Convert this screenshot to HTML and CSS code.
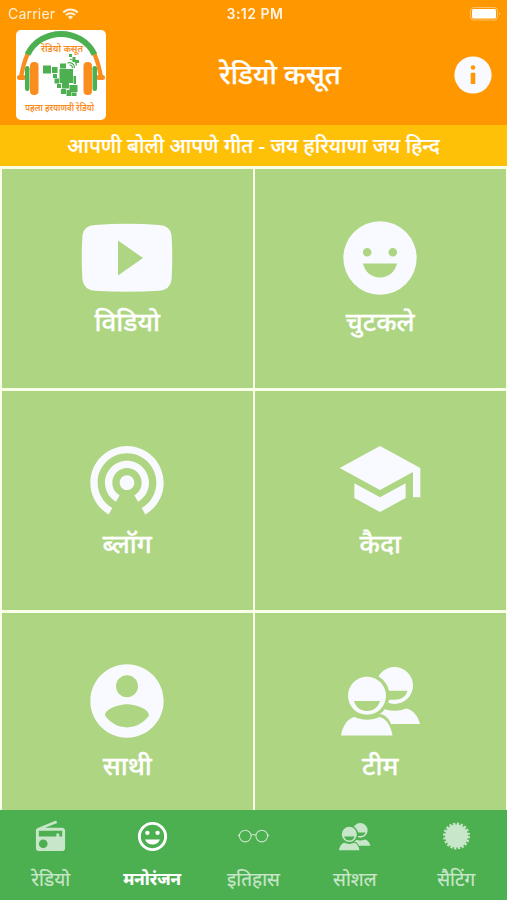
FILE: index.html
```html
<!DOCTYPE html>
<html lang="hi">
<head>
  <meta charset="UTF-8" />
  <meta name="viewport" content="width=device-width, initial-scale=1" />
  <title>रेडियो कसूत</title>
  <link rel="stylesheet" href="styles.css">
</head>
<body>
  <!-- Shared icons -->
  <svg class="sprite" width="0" height="0">
    <defs>
      <mask id="mouth-front" maskUnits="userSpaceOnUse" x="0" y="0" width="88" height="88">
        <rect width="88" height="88" fill="#fff" />
        <path d="M18 44h26c-1.500 6-6.500 10-13 10s-11.500-4-13-10z" fill="#000" />
      </mask>
      <mask id="behind" maskUnits="userSpaceOnUse" x="0" y="0" width="88" height="88">
        <rect width="88" height="88" fill="#fff" />
        <circle cx="31" cy="38.700" r="22.500" fill="#000" />
        <path d="M50 33.700h21.500c-1.500 6-6.500 9-13 9h-8.500z" fill="#000" />
        <path d="M2 81c2-12 8-23 17-24h25c9 1 13 12 15 24z" fill="#000" />
      </mask>
    </defs>
    <symbol id="people" viewBox="0 0 88 88">
      <g mask="url(#behind)">
        <circle cx="58.500" cy="28.500" r="18.500" />
        <path d="M42 50l5 1.500c7 3 16 3 23 0 6 .5 12 7 14 15.500H44z" />
      </g>
      <circle cx="31" cy="38.700" r="19" mask="url(#mouth-front)" />
      <path d="M18.500 60c8 3.500 17 3.500 25 0 6.500 1 11.500 9 13 18.500H5c1.500-9.500 7-17.500 13.500-18.500z" />
    </symbol>
  </svg>

  <div class="app">
    <header class="header">
      <div class="status-bar">
        <div class="carrier">
          <span>Carrier</span>
          <svg class="wifi" viewBox="0 0 18 13">
            <path d="M1.200 4.800a11 11 0 0 1 15.600 0M4 7.700a7 7 0 0 1 10 0" fill="none" stroke="currentColor" stroke-width="2.200" />
            <path d="M9 12.500L6.200 9.700a4 4 0 0 1 5.600 0z" />
          </svg>
        </div>
        <span class="clock">3:12 PM</span>
        <svg class="battery" viewBox="0 0 32 14">
          <rect x=".5" y=".5" width="27" height="12.500" rx="3" fill="none" stroke="#fff" stroke-opacity=".4" />
          <rect x="2" y="2" width="24" height="9.500" rx="1.500" />
          <path d="M29.300 4.700q2 2 0 4z" opacity=".5" />
        </svg>
      </div>

      <div class="title-bar">
        <svg class="logo" viewBox="0 0 90 90">
          <rect width="90" height="90" rx="5" fill="#fff" />
          <g fill="none">
            <path d="M5 47C6.500 38 8.500 31 11.500 24M85 47C83.500 38 81.500 31 78.500 24" stroke="#fb8c1e" stroke-width="4.200" />
            <path d="M11.500 24.500C25-3 65-3 78.500 24.500" stroke="#4caf50" stroke-width="6" />
          </g>
          <g fill="#fb8c1e">
            <rect x="1" y="45" width="9" height="5" rx="2.500" />
            <rect x="80" y="45" width="9" height="5" rx="2.500" />
            <rect x="14" y="32" width="8.500" height="33" rx="4" />
            <rect x="67.500" y="32" width="8.500" height="33" rx="4" />
          </g>
          <g fill="#4caf50">
            <rect x="9" y="36" width="4.500" height="25" rx="2.200" />
            <rect x="76.500" y="36" width="4.500" height="25" rx="2.200" />
            <path d="M27 35.500h8v8h-8zM36 37h5.500v6H36zM37 44h4v4h-4zM43.500 39H57V53H43.500zM44 33.500h6v5h-6zM38.500 48.500h4.500v5h-4.500zM41 54h4v4h-4zM46 53h7v5.500h-7zM53.500 55h8v7h-8zM45 59h5v5h-5zM50.500 60h5v6h-5zM56 62.500h4.500V66H56zM57.500 46H60v8h-2.500zM53 24h3v3h-3zM59 30h4v3h-4zM56.500 27h3v5h-3z" />
          </g>
          <path d="M51.500 33a5 5 0 0 1 7 5M53.500 35a3 3 0 0 1 3 3M54 29.500c4 0 6 2 6.500 6" fill="none" stroke="#4caf50" stroke-width="1.200" />
          <text class="logo-text" x="25" y="22" textLength="42" lengthAdjust="spacingAndGlyphs">रेडियो कसूत</text>
          <text class="logo-text" x="9" y="80.500" textLength="69" lengthAdjust="spacingAndGlyphs">पहला हरयाणवी रेडियो</text>
        </svg>
        <h1>रेडियो कसूत</h1>
        <svg class="info" viewBox="0 0 38 38">
          <circle cx="19" cy="19" r="18.600" fill="#f8faff" />
          <circle cx="19" cy="11.500" r="2.300" fill="#ff9800" />
          <rect x="16.700" y="16.700" width="4.600" height="11.300" rx=".7" fill="#ff9800" />
        </svg>
      </div>
    </header>

    <p class="tagline">आपणी बोली आपणे गीत - जय हरियाणा जय हिन्द</p>

    <main class="grid">
      <div class="tile">
        <svg class="tile-icon" viewBox="0 0 88 88">
          <path fill-rule="evenodd" d="M12 12Q44 9.500 76 12Q87 12.500 88.500 22Q90 45 88.500 67Q87 77 76 77.700Q44 80 12 77.700Q1 77 -.5 67Q-2 45 -.5 22Q1 12.500 12 12zM35 27.500v35l25-17.500z" />
        </svg>
        <span>विडियो</span>
      </div>
      <div class="tile">
        <svg class="tile-icon" viewBox="0 0 88 88">
          <path fill-rule="evenodd" d="M44 8.300a36.700 36.700 0 1 0 0 73.400a36.700 36.700 0 0 0 0-73.400zM31.200 35a4.300 4.300 0 1 1 0 8.600a4.300 4.300 0 0 1 0-8.600zM56.800 35a4.300 4.300 0 1 1 0 8.600a4.300 4.300 0 0 1 0-8.600zM27 50.500h34c-2 8.500-8.500 14-17 14s-15-5.500-17-14z" />
        </svg>
        <span>चुटकले</span>
      </div>
      <div class="tile">
        <svg class="tile-icon" viewBox="0 0 24 24">
          <path d="M12 11c-1.100 0-2 .9-2 2s.9 2 2 2 2-.9 2-2-.9-2-2-2zm6 2c0-3.310-2.690-6-6-6s-6 2.690-6 6c0 2.220 1.210 4.150 3 5.190l1-1.740c-1.190-.7-2-1.970-2-3.450 0-2.210 1.790-4 4-4s4 1.790 4 4c0 1.480-.81 2.750-2 3.450l1 1.740c1.790-1.040 3-2.970 3-5.190zM12 3C6.480 3 2 7.480 2 13c0 3.700 2.010 6.920 4.990 8.650l1-1.730C5.610 18.530 4 15.960 4 13c0-4.420 3.580-8 8-8s8 3.580 8 8c0 2.960-1.610 5.530-4 6.920l1 1.730c2.990-1.730 5-4.950 5-8.650 0-5.520-4.480-10-10-10z" />
        </svg>
        <span>ब्लॉग</span>
      </div>
      <div class="tile">
        <svg class="tile-icon" viewBox="0 0 24 24">
          <path d="M5 13.180v4L12 21l7-3.820v-4L12 17l-7-3.820zM12 3L1 9l11 6 9-4.910V17h2V9L12 3z" />
        </svg>
        <span>कैदा</span>
      </div>
      <div class="tile">
        <svg class="tile-icon" viewBox="0 0 24 24">
          <path d="M12 2C6.480 2 2 6.480 2 12s4.480 10 10 10 10-4.480 10-10S17.520 2 12 2zm0 3c1.660 0 3 1.340 3 3s-1.340 3-3 3-3-1.340-3-3 1.340-3 3-3zm0 14.200c-2.500 0-4.710-1.280-6-3.220.03-1.990 4-3.080 6-3.080 1.990 0 5.970 1.090 6 3.080-1.290 1.940-3.500 3.220-6 3.220z" />
        </svg>
        <span>साथी</span>
      </div>
      <div class="tile">
        <svg class="tile-icon"><use href="#people" /></svg>
        <span>टीम</span>
      </div>
    </main>

    <nav class="tabs">
      <a class="tab">
        <svg viewBox="0 0 24 24">
          <path d="M3.240 6.150C2.510 6.430 2 7.170 2 8v12c0 1.100.89 2 2 2h16c1.110 0 2-.9 2-2V8c0-1.110-.89-2-2-2H8.300l8.260-3.340L15.880 1 3.240 6.150zM7 20c-1.660 0-3-1.340-3-3s1.340-3 3-3 3 1.340 3 3-1.340 3-3 3zm13-8h-2v-2h-2v2H4V8h16v4z" />
        </svg>
        <span>रेडियो</span>
      </a>
      <a class="tab active">
        <svg viewBox="0 0 24 24">
          <circle cx="12" cy="12" r="9" fill="none" stroke="currentColor" stroke-width="2" />
          <circle cx="8.500" cy="9.500" r="1.500" />
          <circle cx="15.500" cy="9.500" r="1.500" />
          <path d="M6.900 14h10.200a5.500 5.500 0 0 1-10.200 0z" />
        </svg>
        <span>मनोरंजन</span>
      </a>
      <a class="tab">
        <svg viewBox="0 0 36 36">
          <g fill="none" stroke="currentColor" stroke-width="1.100">
            <circle cx="9.500" cy="17.500" r="6" />
            <circle cx="26.500" cy="17.500" r="6" />
            <path d="M15.500 17q2.500-2 5 0M2 16.500l1.500 1M34 16.500l-1.500 1" />
          </g>
        </svg>
        <span>इतिहास</span>
      </a>
      <a class="tab">
        <svg><use href="#people" /></svg>
        <span>सोशल</span>
      </a>
      <a class="tab">
        <svg viewBox="0 0 36 36">
          <circle cx="18" cy="17.500" r="11.800" />
          <circle cx="18" cy="17.500" r="12.400" fill="none" stroke="currentColor" stroke-width="2.800" stroke-dasharray="2.300 1.596" />
        </svg>
        <span>सैटिंग</span>
      </a>
    </nav>
  </div>
</body>
</html>
```
FILE: styles.css
```css
:root {
  --orange: #ff9800;
  --amber: #ffc107;
  --tile: #aed581;
  --green: #4caf50;
  --line: #faffea;
  --icon: #f8faff;
}

*, *::before, *::after {
  box-sizing: border-box;
  margin: 0;
  padding: 0;
}

body {
  font-family: "Noto Sans", "Noto Sans Devanagari", sans-serif;
  color: #fff;
  background: var(--line);
}

svg {
  fill: currentColor;
  display: block;
}

.sprite {
  position: absolute;
}

.app {
  display: flex;
  flex-direction: column;
  height: 900px;
  overflow: hidden;
}

.header {
  flex: 0 0 125px;
  background: var(--orange);
}

.status-bar {
  display: grid;
  grid-template-columns: 1fr auto 1fr;
  align-items: center;
  height: 27px;
  padding: 0 5px 0 8px;
  font-family: Inter, sans-serif;
  font-size: 14px;
}

.carrier {
  display: flex;
  align-items: center;
  gap: 7px;
  letter-spacing: 0.2px;
  opacity: 0.85;
}

.wifi {
  width: 17px;
  height: 12px;
}

.clock {
  font-weight: 600;
  letter-spacing: 0.5px;
  opacity: 0.9;
}

.battery {
  width: 32px;
  height: 14px;
  justify-self: end;
}

.title-bar {
  display: flex;
  align-items: center;
  justify-content: space-between;
  height: 96px;
  padding: 0 15px 0 16px;
}

.logo {
  width: 90px;
  height: 90px;
}

.logo-text {
  font-size: 9px;
  font-weight: 600;
  fill: #fb8c1e;
}

h1 {
  font-size: 27.5px;
  font-weight: 500;
  line-height: 40px;
  padding-bottom: 2px;
  -webkit-text-stroke: 0.25px;
}

.info {
  width: 38px;
  height: 38px;
}

.tagline {
  flex: 0 0 41px;
  background: var(--amber);
  font-size: 20.5px;
  font-weight: 500;
  line-height: 41px;
  text-align: center;
  white-space: nowrap;
  -webkit-text-stroke: 0.2px;
}

.grid {
  flex: 0 0 644px;
  display: grid;
  grid-template-columns: 1fr 1fr;
  grid-auto-rows: 219.5px;
  gap: 2.5px;
  padding: 2.5px 1.5px 0 2px;
  overflow: hidden;
}

.tile {
  display: flex;
  flex-direction: column;
  align-items: center;
  padding-top: 44px;
  background: var(--tile);
  font-size: 26px;
  font-weight: 500;
  line-height: 40px;
  -webkit-text-stroke: 0.3px;
}

.tile-icon {
  width: 88px;
  height: 88px;
  color: var(--icon);
  overflow: visible;
}

.tabs {
  flex: 0 0 90px;
  display: grid;
  grid-template-columns: repeat(5, 1fr);
  background: var(--green);
}

.tab {
  display: flex;
  flex-direction: column;
  align-items: center;
  padding-top: 9px;
  color: #c8e6c9;
  font-size: 19px;
  line-height: 50px;
  -webkit-text-stroke: 0.2px;
}

.tab svg {
  width: 35px;
  height: 35px;
}

.tab.active {
  color: #fff;
  font-size: 17px;
  font-weight: 700;
}
```
